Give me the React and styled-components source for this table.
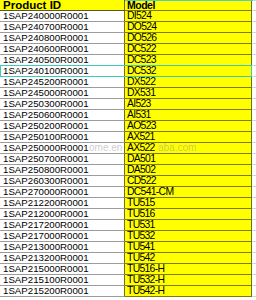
import React from "react";
import styled, { createGlobalStyle } from "styled-components";

const Global = createGlobalStyle`
  html, body { margin: 0; padding: 0; background: #ffffff; }
  body { font-family: "Liberation Sans", Arial, sans-serif; }
`;

const rows = [
  ["1SAP240000R0001", "DI524"],
  ["1SAP240700R0001", "DO524"],
  ["1SAP240800R0001", "DO526"],
  ["1SAP240600R0001", "DC522"],
  ["1SAP240500R0001", "DC523"],
  ["1SAP240100R0001", "DC532"],
  ["1SAP245200R0001", "DX522"],
  ["1SAP245000R0001", "DX531"],
  ["1SAP250300R0001", "AI523"],
  ["1SAP250600R0001", "AI531"],
  ["1SAP250200R0001", "AO523"],
  ["1SAP250100R0001", "AX521"],
  ["1SAP250000R0001", "AX522"],
  ["1SAP250700R0001", "DA501"],
  ["1SAP250800R0001", "DA502"],
  ["1SAP260300R0001", "CD522"],
  ["1SAP270000R0001", "DC541-CM"],
  ["1SAP212200R0001", "TU515"],
  ["1SAP212000R0001", "TU516"],
  ["1SAP217200R0001", "TU531"],
  ["1SAP217000R0001", "TU532"],
  ["1SAP213000R0001", "TU541"],
  ["1SAP213200R0001", "TU542"],
  ["1SAP215000R0001", "TU516-H"],
  ["1SAP215100R0001", "TU532-H"],
  ["1SAP215200R0001", "TU542-H"],
];

const Sheet = styled.div`
  position: relative;
  width: 256px;
  height: 300px;
  overflow: hidden;
`;

const Row = styled.div`
  position: relative;
  display: grid;
  grid-template-columns: 125px 127px 1fr;
  height: 11px;
  box-sizing: border-box;
`;

const IdCell = styled.div`
  box-sizing: border-box;
  height: 11px;
  padding-left: 3px;
  background: ${(p) => (p.$head ? "#ffff00" : "#ffffff")};
  border-bottom: 1px solid ${(p) => (p.$head ? "#5a5a20" : "#9c9c9c")};
  border-right: 1px solid #6e6e20;
  color: #000;
  font-size: ${(p) => (p.$head ? "11.5px" : "9.7px")};
  font-weight: ${(p) => (p.$head ? 700 : 400)};
  line-height: 10px;
  white-space: nowrap;
  overflow: hidden;
`;

const ModelCell = styled.div`
  box-sizing: border-box;
  height: 11px;
  padding-left: 2px;
  background: #ffff00;
  border-bottom: 1px solid #7c7c10;
  border-right: 1px solid #6e6e20;
  color: #000;
  font-size: ${(p) => (p.$head ? "10.5px" : "10.4px")};
  font-weight: ${(p) => (p.$head ? 700 : 400)};
  letter-spacing: ${(p) => (p.$head ? "-0.5px" : "-0.7px")};
  line-height: 10px;
  white-space: nowrap;
  overflow: hidden;
`;

const Gutter = styled.div`
  box-sizing: border-box;
  height: 11px;
  border-bottom: 1px solid #d4d4d4;
  border-top: ${(p) => (p.$head ? "1px solid #d4d4d4" : "none")};
`;

const Selection = styled.div`
  position: absolute;
  left: 0;
  top: -1px;
  width: 252px;
  height: 12px;
  box-sizing: border-box;
  border: 1px solid #40c8b8;
  pointer-events: none;
`;

const TopEdge = styled.div`
  position: absolute;
  left: 125px;
  top: 0;
  width: 128px;
  height: 1px;
  background: #5cc8c0;
`;

const Watermark = styled.span`
  position: absolute;
  top: 142px;
  left: ${(p) => p.$left}px;
  font-family: "Liberation Sans", Arial, sans-serif;
  font-size: 10px;
  color: rgba(160, 160, 160, 0.55);
  pointer-events: none;
  white-space: nowrap;
`;

export default function App() {
  return (
    <>
      <Global />
      <Sheet>
        <Row>
          <IdCell $head>Product ID</IdCell>
          <ModelCell $head>Model</ModelCell>
          <Gutter $head />
        </Row>
        {rows.map(([id, model], i) => (
          <Row key={id}>
            <IdCell>{id}</IdCell>
            <ModelCell>{model}</ModelCell>
            <Gutter />
            {i === 5 && <Selection />}
          </Row>
        ))}
        <TopEdge />
        <Watermark $left={89}>ome.en</Watermark>
        <Watermark $left={158}>aba.com</Watermark>
      </Sheet>
    </>
  );
}
